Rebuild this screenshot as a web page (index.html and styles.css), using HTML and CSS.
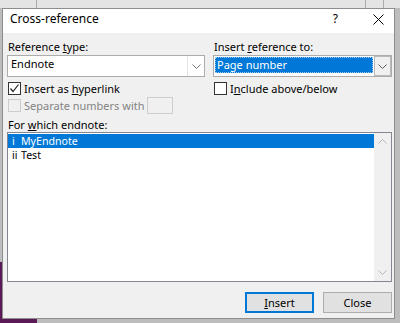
FILE: index.html
```html
<!DOCTYPE html>
<html>
<head>
<meta charset="utf-8">
<link rel="stylesheet" href="styles.css">
</head>
<body>
<div class="dialog">
  <div class="titlebar">
    <span class="title">Cross-reference</span>
    <span class="help">?</span>
    <span class="xbtn"><svg width="11" height="11" viewBox="0 0 11 11"><path d="M0.5 0.5L10.5 10.5M10.5 0.5L0.5 10.5" stroke="#000" stroke-width="1"/></svg></span>
  </div>
  <div class="content">
    <div class="top">
      <div class="col">
        <div class="label">Reference <u>t</u>ype:</div>
        <div class="combo">
          <span class="value">Endnote</span>
          <span class="drop"><svg width="9" height="5" viewBox="0 0 9 5"><path d="M0.5 0.5L4.5 4.5L8.5 0.5" fill="none" stroke="#7a7a7a" stroke-width="1"/></svg></span>
        </div>
        <div class="check">
          <span class="box"><svg width="11" height="11" viewBox="0 0 11 11"><path d="M1.5 5.5L4 8.5L9.5 1.5" fill="none" stroke="#222" stroke-width="1.2"/></svg></span>
          <span>Insert as <u>h</u>yperlink</span>
        </div>
        <div class="check disabled">
          <span class="box"></span>
          <span class="septext">Separate numbers with</span>
          <span class="sepinput"></span>
        </div>
      </div>
      <div class="col">
        <div class="label">Insert <u>r</u>eference to:</div>
        <div class="combo focus">
          <span class="value"><span class="sel">Page number</span></span>
          <span class="drop dropbtn"><svg width="9" height="5" viewBox="0 0 9 5"><path d="M0.5 0.5L4.5 4.5L8.5 0.5" fill="none" stroke="#606060" stroke-width="1"/></svg></span>
        </div>
        <div class="check">
          <span class="box"></span>
          <span>I<u>n</u>clude above/below</span>
        </div>
      </div>
    </div>
    <div class="label listlabel">For <u>w</u>hich endnote:</div>
    <div class="listbox">
      <div class="items">
        <div class="item selected"><span class="num">i</span>MyEndnote</div>
        <div class="item"><span class="num">ii</span>Test</div>
      </div>
      <div class="scrollbar">
        <span class="arrow"><svg width="9" height="5" viewBox="0 0 9 5"><path d="M0.5 4.5L4.5 0.5L8.5 4.5" fill="none" stroke="#b4b4b4" stroke-width="1"/></svg></span>
        <span class="arrow"><svg width="9" height="5" viewBox="0 0 9 5"><path d="M0.5 0.5L4.5 4.5L8.5 0.5" fill="none" stroke="#b4b4b4" stroke-width="1"/></svg></span>
      </div>
    </div>
    <div class="buttons">
      <button class="btn default"><u>I</u>nsert</button>
      <button class="btn">Close</button>
    </div>
  </div>
</div>
</body>
</html>
```

FILE: styles.css
```css
* { box-sizing: border-box; }
html, body { margin: 0; }
body {
  width: 400px;
  height: 323px;
  overflow: hidden;
  padding: 8px 0 0 2px;
  font-family: "Noto Sans", sans-serif;
  font-size: 11px;
  color: #000;
  background:
    linear-gradient(#5b1a57, #5b1a57) 0 319px / 37px 4px no-repeat,
    linear-gradient(#5b1a57, #5b1a57) 0 262px / 2px 61px no-repeat,
    linear-gradient(#ababab, #ababab) 36px 0 / 1px 8px no-repeat,
    linear-gradient(#ababab, #ababab) 365px 0 / 1px 8px no-repeat,
    linear-gradient(#ababab, #ababab) 383px 0 / 1px 8px no-repeat,
    linear-gradient(#e4e4e4, #e4e4e4) 0 0 / 100% 8px no-repeat,
    #bdbdbd;
}
.dialog {
  width: 393px;
  height: 311px;
  border: 1px solid #8d8d8d;
  background: #f0f0f0;
  display: flex;
  flex-direction: column;
}
.titlebar {
  height: 24px;
  background: #fff;
  display: flex;
  align-items: flex-start;
  flex-shrink: 0;
}
.title {
  flex: 1;
  padding-left: 7px;
  font-size: 12px;
  line-height: 20px;
}
.help {
  font-size: 12px;
  line-height: 20px;
  margin-right: 35px;
}
.xbtn {
  margin-top: 5px;
  margin-right: 10px;
  display: flex;
}
.content {
  padding: 5px 2px 0 4px;
}
.top {
  display: grid;
  grid-template-columns: 198px 179px;
  column-gap: 8px;
}
.label {
  height: 17px;
  line-height: 17px;
  padding-left: 1px;
  white-space: nowrap;
}
.combo {
  height: 22px;
  border: 1px solid #acacac;
  background: #fff;
  display: flex;
  align-items: stretch;
}
.value {
  flex: 1;
  padding-left: 3px;
  line-height: 16px;
  white-space: nowrap;
}
.drop {
  width: 17px;
  display: flex;
  align-items: center;
  justify-content: center;
  border-left: 1px solid #e3e3e3;
}
.focus .value {
  padding: 1px;
}
.sel {
  display: block;
  height: 16px;
  line-height: 15px;
  padding-left: 2px;
  background: #0078d7;
  color: #fff;
  outline: 1px dotted #9fc9ee;
  outline-offset: -1px;
}
.dropbtn {
  border: 1px solid #b9b9b9;
  background: #f0f0f0;
}
.check {
  display: flex;
  align-items: center;
  height: 16px;
  margin-top: 3px;
  white-space: nowrap;
}
.box {
  width: 13px;
  height: 13px;
  margin-left: 1px;
  margin-right: 3px;
  border: 1px solid #333;
  background: #fff;
  display: flex;
  align-items: center;
  justify-content: center;
  flex-shrink: 0;
}
.disabled {
  height: 17px;
  margin-top: 1px;
  color: #838383;
}
.disabled .box {
  border-color: #cccccc;
  background: #f0f0f0;
}
.septext {
  width: 123px;
}
.sepinput {
  width: 26px;
  height: 17px;
  border: 1px solid #cccccc;
  background: #f0f0f0;
}
.listlabel {
  margin-top: 4px;
  height: 14px;
  line-height: 14px;
}
.listbox {
  height: 150px;
  border: 1px solid #828790;
  background: #fff;
  display: flex;
}
.items {
  flex: 1;
  padding-top: 1px;
}
.item {
  height: 14px;
  line-height: 14px;
  font-size: 10.6px;
  padding-left: 4px;
  white-space: nowrap;
}
.item.selected {
  background: #0078d7;
  color: #fff;
}
.num {
  display: inline-block;
  width: 9px;
}
.scrollbar {
  width: 17px;
  background: #f0f0f0;
  display: flex;
  flex-direction: column;
  justify-content: space-between;
}
.arrow {
  height: 17px;
  display: flex;
  align-items: center;
  justify-content: center;
}
.buttons {
  display: flex;
  justify-content: flex-end;
  gap: 9px;
  margin-top: 10px;
}
.btn {
  width: 69px;
  height: 21px;
  padding: 0;
  font-family: inherit;
  font-size: 11px;
  color: #000;
  background: #e1e1e1;
  border: 1px solid #adadad;
}
.btn.default {
  border: 2px solid #0078d7;
}
```
